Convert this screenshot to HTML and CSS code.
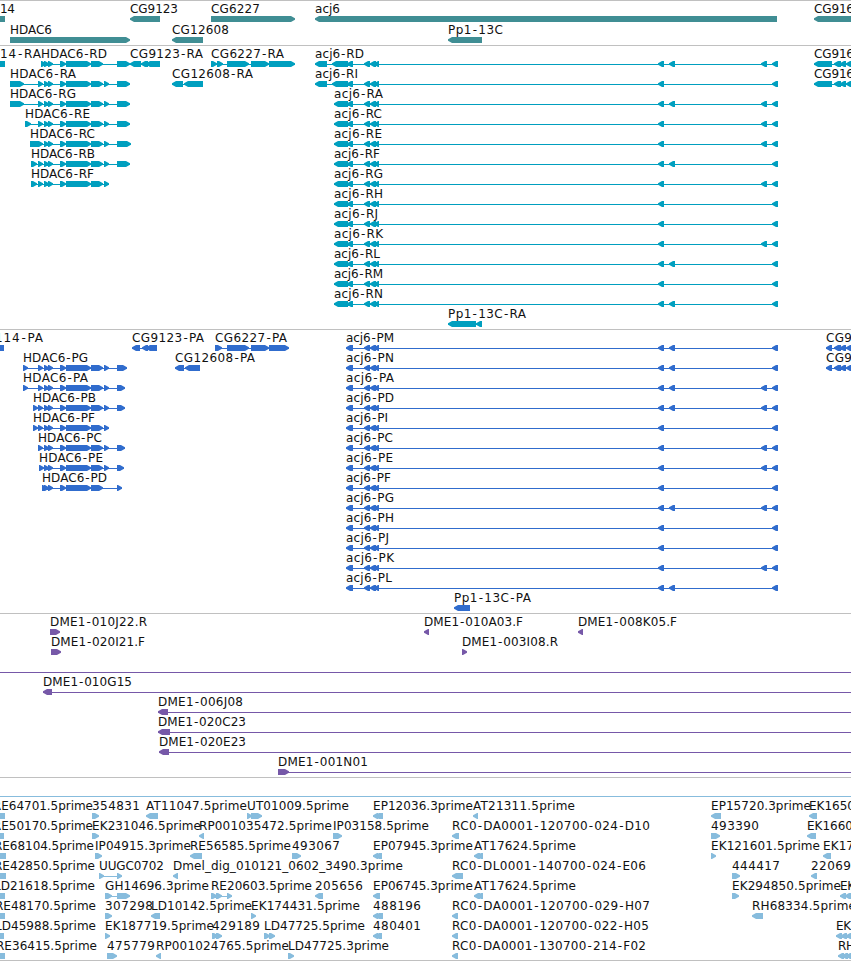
FILE: index.html
```html
<!DOCTYPE html>
<html lang="en">
<head>
  <meta charset="UTF-8">
  <title>acj6 region</title>
  <link rel="stylesheet" href="styles.css">
</head>
<body>

<main class="browser">
  <section class="track genes" id="genes"></section>
  <section class="track transcripts" id="transcripts"></section>
  <section class="track proteins" id="proteins"></section>
  <section class="track clones" id="clones"></section>
  <section class="track ests" id="ests"></section>
</main>

<script src="tracks.js"></script>
</body>
</html>
```
FILE: styles.css
```css
body {
  margin: 0;
  background-color: #fff;
  overflow: hidden;
}
.browser {
  width: 851px;
  overflow: hidden;
  border-bottom: 1px solid #c0c0c0;
}
.track {
  border-top: 1px solid #c0c0c0;
  padding-bottom: 3px;
}
.genes { color: #408e94; padding-bottom: 2px; }
.transcripts { color: #009fbf; }
.proteins { color: #306ccd; }
.clones { color: #7658a8; }
.ests { color: #87bcdd; padding-bottom: 2px; }

.row {
  display: block;
  width: 100%;
  height: 20px;
  overflow: visible;
}
.genes .row { height: 21px; }

.row path, .row rect { fill: currentColor; }
.row text {
  font-family: "DejaVu Sans", sans-serif;
  font-size: 12px;
  fill: #111;
}
```
FILE: tracks.js
```js
// exons shared by most HDAC6 isoforms
const mid = "44-49 48-53 60-66 66-91 91-103";
const hdac = "38-43 " + mid + " 104-109";

// acj6: 3' exons followed by the optional upstream ones
function acj(start, far) {
  return start + " 364-370 370-376 374-379 658-664 " + far + " 772-778";
}
const long = "315-327 332-348 347-353";
const short = "334-348 347-353";
const cds = "346-352 348-353";
const B = "669-675", C = "761-767", BC = "669-675 761-767";

// feature: [name, x, text width, strand, exons, line end]
const tracks = {
  genes: [
    [["14", 0, 15, 0, "0-5"], ["CG9123", 130, 48, -1, "130-160"], ["CG6227", 211, 49, 1, "211-295"],
     ["acj6", 315, 25, -1, "315-777"], ["CG916", 814, 40, -1, "814-860"]],
    [["HDAC6", 10, 42, 1, "10-130"], ["CG12608", 172, 57, -1, "172-203"], ["Pp1-13C", 448, 55, -1, "448-482"]]
  ],
  transcripts: [
    [["14-RA", 0, 41, 0, "0-5"], ["HDAC6-RD", 41, 66, 1, "41-46 " + mid + " 117-130"],
     ["CG9123-RA", 130, 73, -1, "130-141 141-148 146-160"],
     ["CG6227-RA", 211, 73, 1, "211-217 217-223 227-249 251-269 269-295"],
     ["acj6-RD", 315, 49, -1, acj(long, BC)], ["CG916", 814, 40, -1, "814-832 834-841 840-846 846-852"]],
    [["HDAC6-RA", 10, 66, 1, "10-24 " + hdac + " 117-130"], ["CG12608-RA", 172, 81, -1, "172-183 184-191 187-203"],
     ["acj6-RI", 315, 43, -1, acj(long, "")], ["CG916", 814, 40, -1, "814-832 834-841 840-846 846-852"]],
    [["HDAC6-RG", 10, 66, 1, "10-24 " + hdac + " 117-130"], ["acj6-RA", 334, 49, -1, acj(short, BC)]],
    [["HDAC6-RE", 25, 65, 1, "25-31 " + hdac + " 117-130"], ["acj6-RC", 334, 48, -1, acj(short, C)]],
    [["HDAC6-RC", 30, 65, 1, "30-43 " + mid + " 104-109 117-131"], ["acj6-RE", 334, 48, -1, acj(short, C)]],
    [["HDAC6-RB", 31, 64, 1, "31-37 " + hdac + " 117-130"], ["acj6-RF", 334, 46, -1, acj(short, B)]],
    [["HDAC6-RF", 31, 63, 1, "31-37 " + hdac], ["acj6-RG", 334, 49, -1, acj(short, C)]],
    [["acj6-RH", 334, 49, -1, acj(short, "")]],
    [["acj6-RJ", 334, 44, -1, acj(short, "")]],
    [["acj6-RK", 334, 49, -1, acj(short, C)]],
    [["acj6-RL", 334, 46, -1, acj(short, B)]],
    [["acj6-RM", 334, 49, -1, acj(short, "")]],
    [["acj6-RN", 334, 49, -1, acj(short, B)]],
    [["Pp1-13C-RA", 448, 78, -1, "448-476 476-482"]]
  ],
  proteins: [
    [["114-PA", -5, 48, 0, "0-4"], ["CG9123-PA", 132, 72, -1, "132-140 142-148 146-157"],
     ["CG6227-PA", 215, 72, 1, "215-222 227-249 251-269 269-289"],
     ["acj6-PM", 346, 48, -1, acj(cds, B)], ["CG9", 826, 26, -1, "826-832 834-841 840-846 846-852"]],
    [["HDAC6-PG", 23, 65, 1, "23-28 " + hdac + " 117-127"], ["CG12608-PA", 175, 80, -1, "175-184 185-191 187-200"],
     ["acj6-PN", 346, 48, -1, acj(cds, B)], ["CG9", 826, 26, -1, "826-832 834-841 840-846 846-852"]],
    [["HDAC6-PA", 23, 65, 1, "23-28 " + hdac + " 117-125"], ["acj6-PA", 346, 48, -1, acj(cds, BC)]],
    [["HDAC6-PB", 33, 63, 1, "33-38 " + hdac + " 117-125"], ["acj6-PD", 346, 48, -1, acj(cds, BC)]],
    [["HDAC6-PF", 33, 62, 1, "33-38 " + hdac], ["acj6-PI", 346, 42, -1, acj(cds, "")]],
    [["HDAC6-PC", 38, 64, 1, hdac + " 117-125"], ["acj6-PC", 346, 47, -1, acj(cds, C)]],
    [["HDAC6-PE", 39, 64, 1, "39-44 " + mid + " 104-109 117-124"], ["acj6-PE", 346, 47, -1, acj(cds, C)]],
    [["HDAC6-PD", 42, 65, 1, "42-47 " + mid + " 117-122"], ["acj6-PF", 346, 45, -1, acj(cds, "")]],
    [["acj6-PG", 346, 48, -1, acj(cds, BC)]],
    [["acj6-PH", 346, 48, -1, acj(cds, "")]],
    [["acj6-PJ", 346, 43, -1, acj(cds, "")]],
    [["acj6-PK", 346, 48, -1, acj(cds, C)]],
    [["acj6-PL", 346, 46, -1, acj(cds, B)]],
    [["Pp1-13C-PA", 454, 77, -1, "454-470"]]
  ],
  clones: [
    [["DME1-010J22.R", 50, 97, 1, "50-60"], ["DME1-010A03.F", 424, 99, -1, "424-429"], ["DME1-008K05.F", 578, 99, -1, "578-583"]],
    [["DME1-020I21.F", 51, 94, 1, "51-61"], ["DME1-003I08.R", 462, 96, 1, "462-467"]],
    [["", 0, 0, 0, "", 851]],
    [["DME1-010G15", 43, 89, -1, "43-52", 851]],
    [["DME1-006J08", 158, 85, -1, "158-168", 851]],
    [["DME1-020C23", 158, 88, -1, "158-170", 851]],
    [["DME1-020E23", 159, 87, -1, "159-169", 851]],
    [["DME1-001N01", 278, 90, 1, "278-289", 851]]
  ],
  ests: [
    [["", 0, 0, 0, "", 851]],
    [["RE64701.5prime", -7, 100, 0, "0-5"], ["354831", 92, 48, 1, "92-99"], ["AT11047.5prime", 146, 101, -1, "146-158"],
     ["UT01009.5prime", 247, 102, 1, "247-252 251-262"], ["EP12036.3prime", 373, 100, -1, "373-378 375-383"],
     ["AT21311.5prime", 473, 102, -1, "473-478"], ["EP15720.3prime", 711, 100, -1, "711-721"], ["EK1650", 809, 46, -1, "809-817"]],
    [["RE50170.5prime", -7, 100, 0, "0-4"], ["EK231046.5prime", 92, 109, 1, "92-99"],
     ["RP001035472.5prime", 199, 133, -1, "199-204"], ["IP03158.5prime", 333, 96, 1, "333-342"],
     ["RC0-DA0001-120700-024-D10", 452, 198, -1, "452-459"], ["493390", 711, 48, 1, "711-720"], ["EK1660", 807, 46, -1, "807-816"]],
    [["RE68104.5prime", -6, 100, 0, "0-6"], ["IP04915.3prime", 95, 96, 1, "95-102"], ["RE56585.5prime", 190, 101, -1, "190-202"],
     ["493067", 292, 48, 1, "292-301"], ["EP07945.3prime", 373, 100, -1, "373-378 375-382"],
     ["AT17624.5prime", 474, 102, -1, "474-480 477-483"], ["EK121601.5prime", 711, 109, 1, "711-716"], ["EK17", 823, 31, -1, "823-831"]],
    [["RE42850.5prime", -6, 101, 0, "0-6"], ["UUGC0702", 99, 65, 1, "99-104 117-122"],
     ["Dmel_dig_010121_0602_3490.3prime", 173, 230, -1, "173-178"],
     ["RC0-DL0001-140700-024-E06", 452, 194, -1, "452-463"], ["444417", 732, 48, 1, "732-740"], ["22069", 811, 40, -1, "811-817"]],
    [["LD21618.5prime", -6, 101, 0, "0-5"], ["GH14696.3prime", 105, 104, 1, "105-112 117-130"],
     ["RE20603.5prime", 211, 101, 1, "211-217 216-222 227-232"], ["205656", 315, 48, -1, "315-323"],
     ["EP06745.3prime", 373, 100, -1, "373-380"], ["AT17624.5prime", 474, 102, -1, "474-480 477-483"],
     ["EK294850.5prime", 732, 109, 1, "732-739"], ["EK", 840, 15, -1, "840-846 845-852"]],
    [["RE48170.5prime", -5, 101, 0, "0-5"], ["307298", 105, 48, 1, "105-112"], ["LD10142.5prime", 151, 101, -1, "151-160"],
     ["EK174431.5prime", 251, 109, 1, "251-256"], ["488196", 373, 48, -1, "373-378 375-383"],
     ["RC0-DA0001-120700-029-H07", 452, 198, -1, "452-458"], ["RH68334.5prime", 752, 104, -1, "752-763"]],
    [["LD45988.5prime", -5, 101, 0, "0-4"], ["EK187719.5prime", 105, 109, 1, "105-110"], ["429189", 212, 48, 1, "212-218 216-222"],
     ["LD47725.5prime", 264, 101, 1, "264-270 269-275"], ["480401", 373, 48, -1, "373-378 375-382"],
     ["RC0-DA0001-120700-022-H05", 452, 197, -1, "452-458"], ["EK", 836, 15, -1, "836-842 841-847 846-852"]],
    [["RE36415.5prime", -4, 101, 0, "0-5"], ["475779", 107, 48, 1, "107-117"], ["RP001024765.5prime", 156, 133, -1, "156-161"],
     ["LD47725.3prime", 288, 101, 1, "288-294"], ["RC0-DA0001-130700-214-F02", 452, 194, -1, "452-458"],
     ["RH", 838, 17, -1, "838-844 842-848 846-852"]]
  ]
};

// bar with a slightly blunt head on its 3' side
function exonPath(a, b, strand) {
  const head = strand ? Math.min(5, b - a) : 0;
  if (!strand) return `M${a} 15H${b}V21H${a}Z`;
  if (strand < 0) return `M${a} 17.3L${a + head - 1} 15H${b}V21H${a + head - 1}L${a} 18.7Z`;
  return `M${a} 15H${b - head + 1}L${b} 17.3V18.7L${b - head + 1} 21H${a}Z`;
}

function drawFeature([name, x, width, strand, exons, lineEnd]) {
  const list = exons.split(" ").filter(Boolean).map(e => e.split("-").map(Number));
  let out = "";
  const start = list.length ? list[0][0] : x;
  const end = lineEnd || list[list.length - 1][1];
  if (list.length > 1 || lineEnd) {
    out += `<rect x="${start}" y="18" width="${end - start}" height="1"/>`;
  }
  if (list.length) {
    out += `<path d="${list.map(([a, b]) => exonPath(a, b, strand)).join("")}"/>`;
  }
  if (name) {
    // a little air on both sides of every hyphen
    const dx = [...name].map((c, i) => c === "-" || name[i - 1] === "-" ? 0.8 : 0).join(" ");
    out += `<text x="${x}" y="12" dx="${dx}" textLength="${width}">${name}</text>`;
  }
  return out;
}

for (const id in tracks) {
  document.getElementById(id).innerHTML = tracks[id]
    .map(row => `<svg class="row">${row.map(drawFeature).join("")}</svg>`)
    .join("");
}
```
